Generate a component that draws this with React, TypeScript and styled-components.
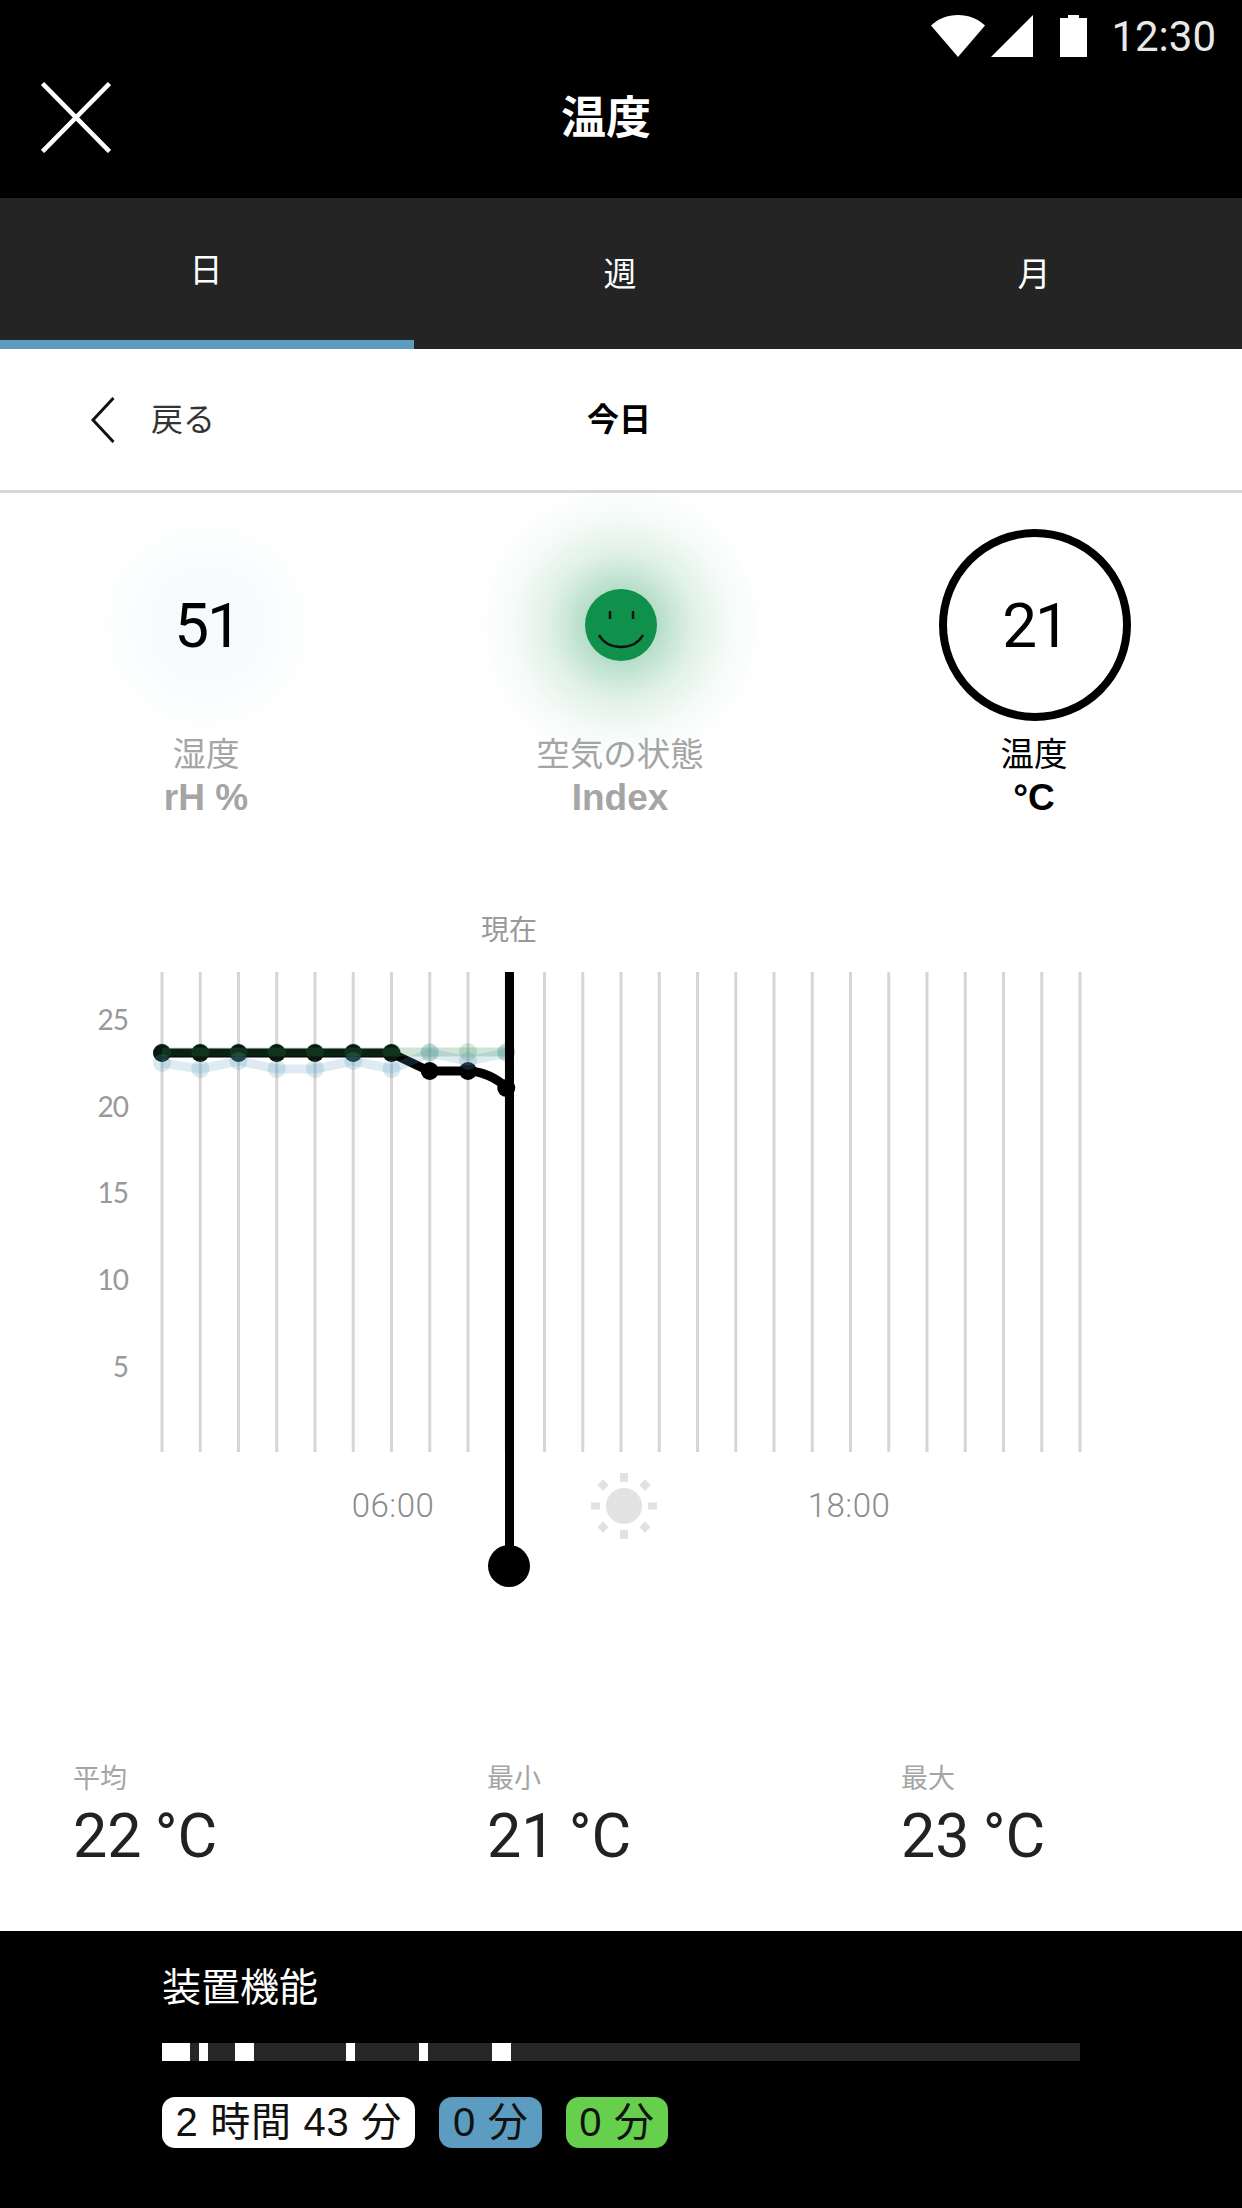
import React from "react";
import styled, { createGlobalStyle } from "styled-components";

const CJK = `"Liberation Sans", "Noto Sans CJK JP", sans-serif`;

const Global = createGlobalStyle`
  html, body { margin: 0; padding: 0; background: #fff; }
  * { box-sizing: border-box; }
`;

const Screen = styled.div`
  width: 1242px;
  height: 2208px;
  display: flex;
  flex-direction: column;
  overflow: hidden;
  background: #fff;
  font-family: ${CJK};
`;

const Header = styled.header`
  height: 198px;
  background: #000;
  display: flex;
  flex-direction: column;
`;

const StatusBar = styled.div`
  height: 72px;
  padding: 15px 26px 0 0;
  display: flex;
  justify-content: flex-end;
  align-items: flex-start;
`;

const StatusIcon = styled.svg<{ $gap?: number }>`
  display: block;
  flex: none;
  margin-left: ${(p) => p.$gap ?? 0}px;
`;

const Clock = styled.span`
  font-family: Roboto, sans-serif;
  font-size: 42px;
  line-height: 44px;
  color: #e8e8e8;
  margin-left: 24px;
`;

const TitleRow = styled.div`
  display: flex;
  align-items: flex-start;
  padding-left: 41px;
`;

const CloseIcon = styled.svg`
  display: block;
  margin-top: 10px;
`;

const Title = styled.h1`
  margin: 22px 0 0 450px;
  font-size: 45px;
  line-height: 50px;
  font-weight: 700;
  color: #fff;
`;

const TabBar = styled.nav`
  height: 151px;
  background: #242424;
  display: grid;
  grid-template-columns: repeat(3, 1fr);
`;

const Tab = styled.div<{ $active?: boolean }>`
  display: flex;
  justify-content: center;
  padding-top: ${(p) => (p.$active ? 53 : 57)}px;
  padding-right: 2px;
  border-bottom: 9px solid ${(p) => (p.$active ? "#5b9cc0" : "transparent")};
  color: #fff;
  font-size: 33px;
  line-height: 40px;
`;

const SubHeader = styled.div`
  height: 144px;
  border-bottom: 3px solid #d8d8d8;
  display: flex;
  align-items: center;
  padding-left: 91px;
`;

const BackIcon = styled.svg`
  display: block;
`;

const BackLabel = styled.span`
  margin: -5px 0 0 36px;
  font-size: 32px;
  color: #333;
`;

const DayLabel = styled.span`
  margin: -5px 0 0 372px;
  font-size: 32px;
  font-weight: 700;
  color: #000;
`;

const Metrics = styled.section`
  display: grid;
  grid-template-columns: repeat(3, 414px);
  padding-top: 36px;
`;

const Metric = styled.div<{ $on?: boolean }>`
  display: flex;
  flex-direction: column;
  align-items: center;
  color: ${(p) => (p.$on ? "#000" : "#a5a5a5")};
`;

const Dial = styled.div<{ $ring?: boolean }>`
  width: 192px;
  height: 192px;
  border-radius: 50%;
  display: flex;
  align-items: center;
  justify-content: center;
  position: relative;
  font-family: Roboto, sans-serif;
  font-size: 62px;
  letter-spacing: -2px;
  color: #000;
  border: ${(p) => (p.$ring ? "8px solid #000" : "none")};
`;

const Glow = styled.div<{ $stops: string; $size: number }>`
  position: absolute;
  left: 50%;
  top: 50%;
  width: ${(p) => p.$size}px;
  height: ${(p) => p.$size}px;
  transform: translate(-50%, -50%);
  border-radius: 50%;
  background: radial-gradient(circle closest-side, ${(p) => p.$stops});
`;

const DialValue = styled.span`
  position: relative;
`;

const Smile = styled.svg`
  position: relative;
  display: block;
`;

const MetricName = styled.div`
  margin: 16px 2px 0 0;
  font-size: 33.5px;
  line-height: 36px;
`;

const MetricUnit = styled.div`
  margin: 3px 2px 0 0;
  font-size: 37px;
  line-height: 44px;
  font-weight: 700;
`;

const Chart = styled.svg`
  display: block;
  flex: none;
  margin-top: 80px;
`;

const AxisText = styled.text`
  font-family: Lato, sans-serif;
  font-size: 28px;
  letter-spacing: -1px;
  fill: #999;
`;

const TimeText = styled.text`
  font-family: Roboto, sans-serif;
  font-weight: 300;
  font-size: 33px;
  letter-spacing: 0.5px;
  fill: #8c8c8c;
`;

const NowText = styled.text`
  font-family: "Noto Sans CJK JP", sans-serif;
  font-size: 28px;
  fill: #999;
`;

const Stats = styled.section`
  display: grid;
  grid-template-columns: repeat(3, 414px);
  padding-left: 73px;
  margin-top: 164px;
`;

const Stat = styled.div`
  display: flex;
  flex-direction: column;
`;

const StatLabel = styled.div`
  font-size: 27px;
  line-height: 30px;
  color: #a5a5a5;
`;

const StatValue = styled.div`
  margin-top: 7px;
  font-size: 61px;
  line-height: 70px;
  font-family: Roboto, sans-serif;
  word-spacing: -2px;
  color: #222;
`;

const Footer = styled.footer`
  margin-top: auto;
  height: 277px;
  background: #000;
  padding: 32px 162px 0;
  display: flex;
  flex-direction: column;
`;

const FooterTitle = styled.div`
  font-size: 39px;
  line-height: 50px;
  color: #fff;
`;

const Track = styled.div`
  position: relative;
  margin-top: 30px;
  height: 18px;
  background: #262626;
`;

const Segment = styled.div`
  position: absolute;
  top: 0;
  bottom: 0;
  background: #fff;
`;

const Pills = styled.div`
  display: flex;
  gap: 24px;
  margin-top: 36px;
`;

const Pill = styled.div<{ $bg: string }>`
  height: 51px;
  padding: 0 13.5px;
  border-radius: 13px;
  background: ${(p) => p.$bg};
  color: #111;
  font-size: 40px;
  line-height: 51px;
  letter-spacing: 0.7px;
  white-space: nowrap;
`;

const X0 = 162;
const STEP = 38.25;
const TOP = 72;
const OFF = 900;
const px = (i: number) => X0 + i * STEP;
const py = (y: number) => y - OFF;

const black = [1053, 1053, 1053, 1053, 1053, 1053, 1053, 1071, 1071, 1088];
const green = [1052, 1052, 1052, 1052, 1052, 1052, 1052, 1052, 1052, 1052];
const blue = [1063, 1069, 1061, 1069, 1069, 1061, 1069, 1053, 1061, 1053];

const pts = (a: number[]) => a.map((y, i) => `${px(i)},${py(y)}`).join(" ");

const Series = ({ data, color, width, opacity }: { data: number[]; color: string; width: number; opacity: number }) => (
  <polyline points={pts(data)} fill="none" stroke={color} strokeWidth={width} strokeLinejoin="round" opacity={opacity} />
);

const Dots = ({ data, color, r, opacity }: { data: number[]; color: string; r: number; opacity: number }) => (
  <g fill={color} opacity={opacity}>
    {data.map((y, i) => (
      <circle key={i} cx={px(i)} cy={py(y)} r={r} />
    ))}
  </g>
);

const segments = [
  [0, 28],
  [37, 9],
  [73, 19],
  [184, 9],
  [257, 9],
  [330, 19],
];

export default function App() {
  return (
    <Screen>
      <Global />
      <Header>
        <StatusBar>
          <StatusIcon width="54" height="42" viewBox="0 0 54 42">
            <path d="M0 10.5C7 4 16.5 0 27 0s20 4 27 10.5L27 42z" fill="#fff" />
          </StatusIcon>
          <StatusIcon $gap={6} width="42" height="42" viewBox="0 0 42 42">
            <path d="M0 42L42 0v42z" fill="#fff" />
          </StatusIcon>
          <StatusIcon $gap={27} width="27" height="42" viewBox="0 0 27 42">
            <path d="M0 3h8V0h11v3h8v39H0z" fill="#fff" />
          </StatusIcon>
          <Clock>12:30</Clock>
        </StatusBar>
        <TitleRow>
          <CloseIcon width="70" height="71" viewBox="0 0 70 71">
            <path d="M1.5 1.5L68.5 69.5M68.5 1.5L1.5 69.5" stroke="#fff" strokeWidth="4.5" fill="none" />
          </CloseIcon>
          <Title>温度</Title>
        </TitleRow>
      </Header>

      <TabBar>
        <Tab $active>日</Tab>
        <Tab>週</Tab>
        <Tab>月</Tab>
      </TabBar>

      <SubHeader>
        <BackIcon width="24" height="46" viewBox="0 0 24 46">
          <path d="M22.5 1L2 23l20.500 22" stroke="#111" strokeWidth="3" fill="none" />
        </BackIcon>
        <BackLabel>戻る</BackLabel>
        <DayLabel>今日</DayLabel>
      </SubHeader>

      <Metrics>
        <Metric>
          <Dial>
            <Glow $stops="rgba(91,156,192,0.05) 0%, rgba(91,156,192,0.04) 50%, transparent 100%" $size={230} />
            <DialValue>51</DialValue>
          </Dial>
          <MetricName>湿度</MetricName>
          <MetricUnit>rH %</MetricUnit>
        </Metric>
        <Metric>
          <Dial>
            <Glow $stops="rgba(15,145,75,0.34) 0%, rgba(15,145,75,0.3) 25%, rgba(15,145,75,0.13) 50%, rgba(15,145,75,0.04) 75%, transparent 100%" $size={290} />
            <Smile width="72" height="72" viewBox="0 0 72 72">
              <circle cx="36" cy="36" r="36" fill="#0f914b" />
              <path d="M25 22v8M48 22v8" stroke="#111" strokeWidth="2.500" />
              <path d="M14 46c5 9 13 12 22 12s17-3 22-12" stroke="#111" strokeWidth="2.500" fill="none" />
            </Smile>
          </Dial>
          <MetricName>空気の状態</MetricName>
          <MetricUnit>Index</MetricUnit>
        </Metric>
        <Metric $on>
          <Dial $ring>
            <DialValue>21</DialValue>
          </Dial>
          <MetricName>温度</MetricName>
          <MetricUnit>°C</MetricUnit>
        </Metric>
      </Metrics>

      <Chart width="1242" height="700" viewBox="0 0 1242 700">
        {Array.from({ length: 25 }, (_, i) => (
          <line key={i} x1={px(i)} x2={px(i)} y1={TOP} y2={552} stroke="#d6d6d6" strokeWidth="3" />
        ))}
        {[
          ["25", 1030],
          ["20", 1117],
          ["15", 1203],
          ["10", 1290],
          ["5", 1377],
        ].map(([t, y]) => (
          <AxisText key={t} x="128" y={py(y as number)} textAnchor="end">
            {t}
          </AxisText>
        ))}
        <NowText x="509" y="40" textAnchor="middle">現在</NowText>

        <path d="M162 153H391L429 171H468Q490 172 507 188" fill="none" stroke="#000" strokeWidth="9" strokeLinejoin="round" />
        <Dots data={black} color="#000" r={9} opacity={1} />
        <Series data={green} color="#2b8b4e" width={9} opacity={0.23} />
        <Series data={blue} color="#5b9cc0" width={9} opacity={0.2} />
        <Dots data={blue} color="#5b9cc0" r={9} opacity={0.22} />
        <Dots data={green} color="#2b8b4e" r={9} opacity={0.18} />

        <rect x="505" y={TOP} width="9" height="600" fill="#000" />
        <circle cx="509" cy={py(1566)} r="21" fill="#000" />

        <TimeText x="393" y={py(1517)} textAnchor="middle">06:00</TimeText>
        <TimeText x="849" y={py(1517)} textAnchor="middle">18:00</TimeText>

        <g fill="#e2e2e2" transform={`translate(624 ${py(1506)})`}>
          <circle r="18" />
          <rect x="-4" y="-33" width="8" height="9" />
          <rect x="-4" y="24" width="8" height="9" />
          <rect x="-33" y="-3.500" width="9" height="7" />
          <rect x="24" y="-3.500" width="9" height="7" />
          <rect x="-4" y="-4" width="8" height="8" transform="translate(-21 -21) rotate(45)" />
          <rect x="-4" y="-4" width="8" height="8" transform="translate(21 -21) rotate(45)" />
          <rect x="-4" y="-4" width="8" height="8" transform="translate(-21 21) rotate(45)" />
          <rect x="-4" y="-4" width="8" height="8" transform="translate(21 21) rotate(45)" />
        </g>
      </Chart>

      <Stats>
        <Stat>
          <StatLabel>平均</StatLabel>
          <StatValue>22 °C</StatValue>
        </Stat>
        <Stat>
          <StatLabel>最小</StatLabel>
          <StatValue>21 °C</StatValue>
        </Stat>
        <Stat>
          <StatLabel>最大</StatLabel>
          <StatValue>23 °C</StatValue>
        </Stat>
      </Stats>

      <Footer>
        <FooterTitle>装置機能</FooterTitle>
        <Track>
          {segments.map(([l, w]) => (
            <Segment key={l} style={{ left: l, width: w }} />
          ))}
        </Track>
        <Pills>
          <Pill $bg="#fff">2 時間 43 分</Pill>
          <Pill $bg="#5b9cc0">0 分</Pill>
          <Pill $bg="#66d04d">0 分</Pill>
        </Pills>
      </Footer>
    </Screen>
  );
}
